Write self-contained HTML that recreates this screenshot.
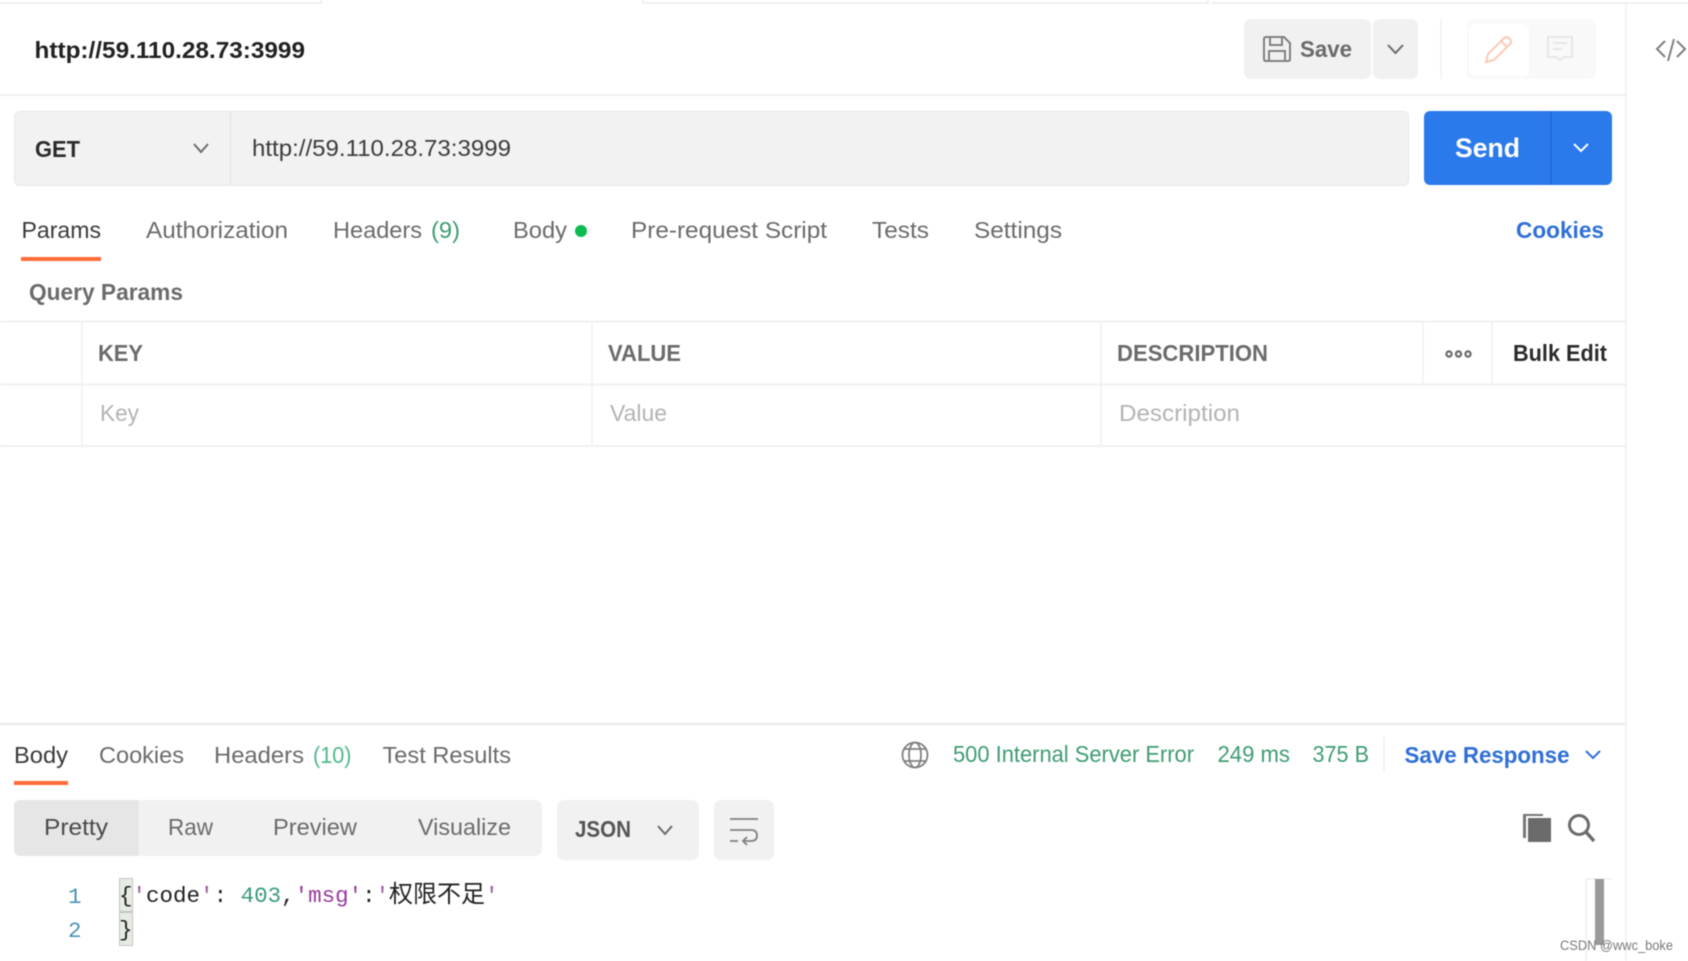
<!DOCTYPE html>
<html><head><meta charset="utf-8"><style>
html,body{margin:0;padding:0;background:#fff;width:1688px;height:961px;overflow:hidden}
svg{display:block;filter:blur(.55px)}
text{font-family:"Liberation Sans","Noto Sans CJK SC",sans-serif;font-size:23px;fill:#6b6b6b}
.b{font-weight:bold}
.mono{font-family:"Liberation Mono","Noto Sans CJK SC",monospace;font-size:22.5px}
</style></head><body>
<svg width="1688" height="961" viewBox="0 0 1688 961" xmlns="http://www.w3.org/2000/svg">
<rect width="1688" height="961" fill="#fff"/>
<!-- top tabs -->
<path d="M0 3H321V0M643 0V3H1208V0M1211 3H1688" fill="none" stroke="#ececec" stroke-width="1.5"/>
<path d="M1626 4V961" stroke="#f0f0f0" stroke-width="1.5"/>
<path d="M0 95H1626" stroke="#f0f0f0" stroke-width="2"/>
<text class="b" x="34.500" y="58" textLength="270.500" lengthAdjust="spacingAndGlyphs" style="fill:#212121">http://59.110.28.73:3999</text>
<!-- save -->
<rect x="1244" y="19" width="127" height="60" rx="7" fill="#f1f1f1"/>
<rect x="1373" y="19" width="45" height="60" rx="7" fill="#f1f1f1"/>
<path d="M1266 37H1284L1290 43V59Q1290 61 1288 61H1266Q1264 61 1264 59V39Q1264 37 1266 37ZM1270 37V45H1282V37M1269 61V51H1285V61" fill="none" stroke="#808080" stroke-width="2"/>
<text class="b" x="1300" y="57" textLength="52" lengthAdjust="spacingAndGlyphs">Save</text>
<path d="M1388 45L1395.500 53L1403 45" fill="none" stroke="#6b6b6b" stroke-width="2"/>
<path d="M1441 19V79" stroke="#f0f0f0" stroke-width="1.5"/>
<rect x="1467" y="19" width="129" height="60" rx="7" fill="#f9f9f9"/>
<rect x="1469" y="24" width="60" height="52" rx="6" fill="#fff"/>
<path d="M1486 62L1488 54L1504 38Q1507 36 1510 39Q1512 42 1510 44L1494 60ZM1501 41L1507 47" fill="none" stroke="#fcc9b8" stroke-width="2"/>
<path d="M1548 37H1572V57H1564L1560 60L1556 57H1548ZM1553 43H1567M1553 49H1562" fill="none" stroke="#e6e6e6" stroke-width="2"/>
<path d="M1665 41L1657 49L1665 57M1677 41L1685 49L1677 57M1674 39L1668 61" fill="none" stroke="#808080" stroke-width="2"/>
<!-- url bar -->
<rect x="14.500" y="111.500" width="1394" height="74" rx="5" fill="#f2f2f2" stroke="#e8e8e8"/>
<path d="M230.500 112V185" stroke="#e6e6e6" stroke-width="1.5"/>
<text class="b" x="35" y="157" textLength="45" lengthAdjust="spacingAndGlyphs" style="fill:#2b2b2b">GET</text>
<path d="M194 144L201 152L208 144" fill="none" stroke="#6b6b6b" stroke-width="2"/>
<text x="252" y="156" textLength="259" lengthAdjust="spacingAndGlyphs" style="fill:#3c3c3c">http://59.110.28.73:3999</text>
<rect x="1424" y="111" width="188" height="74" rx="6" fill="#2a7aeb"/>
<path d="M1551 111V185" stroke="#2168d2" stroke-width="1.5"/>
<text class="b" x="1455" y="157" textLength="65" lengthAdjust="spacingAndGlyphs" style="fill:#fff;font-size:27px">Send</text>
<path d="M1574 144L1581 151L1588 144" fill="none" stroke="#fff" stroke-width="2"/>
<!-- tabs -->
<text x="21.500" y="238" textLength="79.500" lengthAdjust="spacingAndGlyphs" style="fill:#3a3a3a">Params</text>
<rect x="21" y="257" width="80" height="4" fill="#ff6c37"/>
<text x="146" y="238" textLength="142" lengthAdjust="spacingAndGlyphs">Authorization</text>
<text x="333" y="238" textLength="89" lengthAdjust="spacingAndGlyphs">Headers</text>
<text x="431" y="238" textLength="29" lengthAdjust="spacingAndGlyphs" style="fill:#3f9c72">(9)</text>
<text x="513" y="238" textLength="54" lengthAdjust="spacingAndGlyphs">Body</text>
<circle cx="581" cy="231" r="6" fill="#0cbb52"/>
<text x="631" y="238" textLength="196" lengthAdjust="spacingAndGlyphs">Pre-request Script</text>
<text x="872" y="238" textLength="57" lengthAdjust="spacingAndGlyphs">Tests</text>
<text x="974" y="238" textLength="88" lengthAdjust="spacingAndGlyphs">Settings</text>
<text class="b" x="1516" y="238" textLength="88" lengthAdjust="spacingAndGlyphs" style="fill:#2f6fd6">Cookies</text>
<text class="b" x="29" y="300" textLength="154" lengthAdjust="spacingAndGlyphs">Query Params</text>
<!-- table -->
<path d="M0 321.500H1626M0 384.500H1626M0 446H1626" stroke="#f0f0f0" stroke-width="2"/>
<path d="M82 322V446M592 322V446M1101 322V446M1423 322V384M1492 322V384" stroke="#f0f0f0" stroke-width="1.5"/>
<text class="b" x="98" y="361" textLength="45" lengthAdjust="spacingAndGlyphs">KEY</text>
<text class="b" x="608" y="361" textLength="73" lengthAdjust="spacingAndGlyphs">VALUE</text>
<text class="b" x="1117" y="361" textLength="151" lengthAdjust="spacingAndGlyphs">DESCRIPTION</text>
<g fill="none" stroke="#6b6b6b" stroke-width="2.200"><circle cx="1449" cy="354" r="2.600"/><circle cx="1458.500" cy="354" r="2.600"/><circle cx="1468" cy="354" r="2.600"/></g>
<text class="b" x="1513" y="361" textLength="94" lengthAdjust="spacingAndGlyphs" style="fill:#2b2b2b">Bulk Edit</text>
<text x="100" y="421" textLength="39" lengthAdjust="spacingAndGlyphs" style="fill:#b3b3b3">Key</text>
<text x="610" y="421" textLength="57" lengthAdjust="spacingAndGlyphs" style="fill:#b3b3b3">Value</text>
<text x="1119" y="421" textLength="121" lengthAdjust="spacingAndGlyphs" style="fill:#b3b3b3">Description</text>
<!-- response -->
<path d="M0 724H1626" stroke="#ececec" stroke-width="2.500"/>
<text x="14" y="763" textLength="54" lengthAdjust="spacingAndGlyphs" style="fill:#3a3a3a">Body</text>
<rect x="14" y="781" width="54" height="4" fill="#ff6c37"/>
<text x="99" y="763" textLength="85" lengthAdjust="spacingAndGlyphs">Cookies</text>
<text x="214" y="763" textLength="90" lengthAdjust="spacingAndGlyphs">Headers</text>
<text x="313" y="763" textLength="38.500" lengthAdjust="spacingAndGlyphs" style="fill:#4fb98a">(10)</text>
<text x="382.500" y="763" textLength="128.500" lengthAdjust="spacingAndGlyphs">Test Results</text>
<g fill="none" stroke="#808080" stroke-width="1.800"><circle cx="915" cy="755" r="12.500"/><ellipse cx="915" cy="755" rx="6" ry="12.500"/><path d="M904 749H926M904 761H926"/></g>
<text x="953" y="762" textLength="241" lengthAdjust="spacingAndGlyphs" style="fill:#3f9c72">500 Internal Server Error</text>
<text x="1217.500" y="762" textLength="72.500" lengthAdjust="spacingAndGlyphs" style="fill:#3f9c72">249 ms</text>
<text x="1312.500" y="762" textLength="56.500" lengthAdjust="spacingAndGlyphs" style="fill:#3f9c72">375 B</text>
<path d="M1384 736V773" stroke="#efefef" stroke-width="1.500"/>
<text class="b" x="1404.500" y="763" textLength="165" lengthAdjust="spacingAndGlyphs" style="fill:#2f6fd6">Save Response</text>
<path d="M1586 751L1593 758L1600 751" fill="none" stroke="#2f6fd6" stroke-width="2"/>
<!-- toolbar -->
<rect x="14" y="800" width="528" height="56" rx="7" fill="#f1f1f1"/>
<path d="M21 800H138.500V856H21Q14 856 14 849V807Q14 800 21 800Z" fill="#e6e6e6"/>
<text x="44" y="835" textLength="64" lengthAdjust="spacingAndGlyphs" style="fill:#4a4a4a">Pretty</text>
<text x="168" y="835" textLength="45" lengthAdjust="spacingAndGlyphs">Raw</text>
<text x="273" y="835" textLength="84" lengthAdjust="spacingAndGlyphs">Preview</text>
<text x="418" y="835" textLength="93" lengthAdjust="spacingAndGlyphs">Visualize</text>
<rect x="557" y="800" width="142" height="60" rx="7" fill="#f1f1f1"/>
<text class="b" x="575" y="837" textLength="56" lengthAdjust="spacingAndGlyphs" style="fill:#555">JSON</text>
<path d="M658 826L665 834L672 826" fill="none" stroke="#6b6b6b" stroke-width="2"/>
<rect x="714" y="800" width="60" height="60" rx="7" fill="#f1f1f1"/>
<path d="M730 819H758M730 830H751Q757 830 757 835.500Q757 841 751 841H743M747 837L743 841L747 845M730 841H738" fill="none" stroke="#808080" stroke-width="1.800"/>
<path d="M1523 814H1543V816H1526V838H1523Z" fill="#777"/>
<path d="M1528 818H1551V842H1528Z" fill="#6b6b6b"/>
<circle cx="1579" cy="825" r="9.500" fill="none" stroke="#6b6b6b" stroke-width="3"/>
<path d="M1586 832L1594 841" stroke="#6b6b6b" stroke-width="3.400"/>
<!-- code -->
<rect x="119.500" y="878.500" width="13" height="33" fill="#e6ece4" stroke="#c4c4c4"/>
<rect x="119.500" y="912.500" width="13" height="33" fill="#e6ece4" stroke="#c4c4c4"/>
<text class="mono" x="68" y="903" style="fill:#4a94b4">1</text>
<text class="mono" x="68" y="937" style="fill:#4a94b4">2</text>
<text class="mono" x="119" y="902" style="fill:#222">{<tspan style="fill:#9a5a9a">'</tspan>code<tspan style="fill:#9a5a9a">'</tspan>: <tspan style="fill:#3a9a7a">403</tspan>,<tspan style="fill:#9a3a9a">'msg'</tspan>:<tspan style="fill:#9a5a9a">'</tspan></text>
<text x="389" y="902" textLength="96" style="font-size:24px;fill:#222;font-family:'Noto Sans CJK SC',sans-serif">权限不足</text>
<text class="mono" x="485" y="902" style="fill:#9a5a9a">'</text>
<text class="mono" x="119" y="936" style="fill:#222">}</text>
<!-- scrollbar -->
<path d="M1586 879V961M1586 879H1612" stroke="#e6e6e6" stroke-width="1"/>
<rect x="1595" y="879" width="9" height="66" fill="#9a9a9a"/>
<text x="1560" y="950" textLength="113" lengthAdjust="spacingAndGlyphs" style="font-size:14px;fill:#7a7a7a">CSDN @wwc_boke</text>
</svg>
</body></html>
